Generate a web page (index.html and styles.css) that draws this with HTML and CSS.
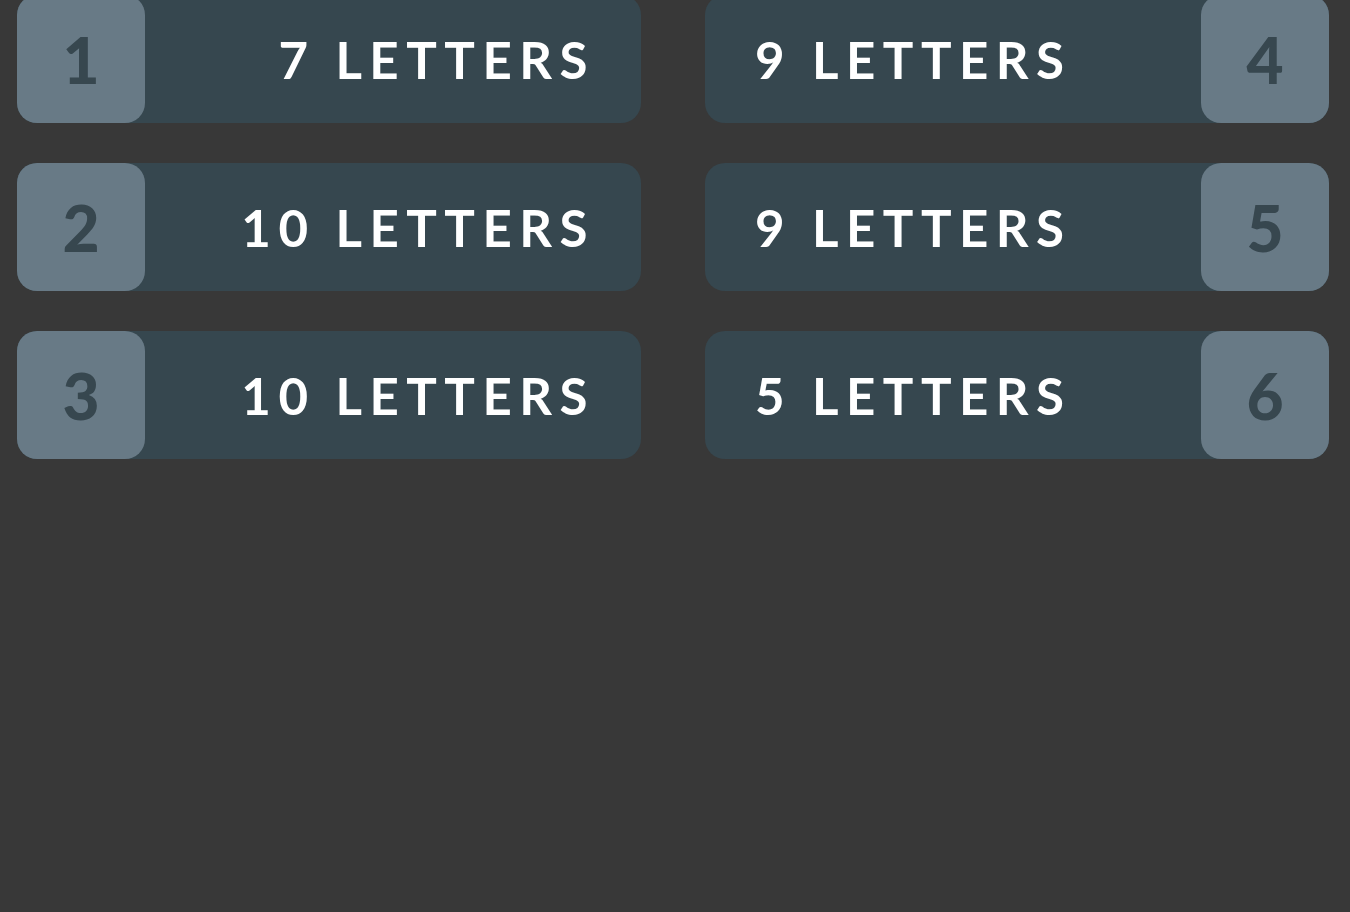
FILE: index.html
```html
<!DOCTYPE html>
<html>
<head>
<meta charset="utf-8">
<link rel="stylesheet" href="styles.css">
</head>
<body>
<div class="board">
  <div class="col">
    <div class="card left"><div class="num">1</div><div class="label">7 LETTERS</div></div>
    <div class="card left"><div class="num">2</div><div class="label">10 LETTERS</div></div>
    <div class="card left"><div class="num">3</div><div class="label">10 LETTERS</div></div>
  </div>
  <div class="col">
    <div class="card right"><div class="label">9 LETTERS</div><div class="num">4</div></div>
    <div class="card right"><div class="label">9 LETTERS</div><div class="num">5</div></div>
    <div class="card right"><div class="label">5 LETTERS</div><div class="num">6</div></div>
  </div>
</div>
</body>
</html>
```
FILE: styles.css
```css
html, body {
  margin: 0;
  padding: 0;
  background: #383838;
  height: 100%;
  overflow: hidden;
}
.board {
  display: grid;
  grid-template-columns: 624px 624px;
  column-gap: 64px;
  padding-left: 17px;
  margin-top: -5px;
  font-family: "Lato", "Open Sans", sans-serif;
}
.col {
  display: flex;
  flex-direction: column;
  gap: 40px;
}
.card {
  height: 128px;
  background: #36474f;
  border-radius: 20px;
  display: flex;
  align-items: center;
}
.num {
  width: 128px;
  height: 128px;
  flex: none;
  background: #687a86;
  border-radius: 20px;
  color: #37474f;
  font-size: 64px;
  font-weight: 900;
  display: flex;
  align-items: center;
  justify-content: center;
}
.label {
  flex: 1;
  color: #ffffff;
  font-size: 51px;
  font-weight: 700;
  letter-spacing: 7.5px;
}
.left .label {
  text-align: right;
  padding-right: 46px;
}
.right .label {
  text-align: left;
  padding-left: 50px;
}
```
